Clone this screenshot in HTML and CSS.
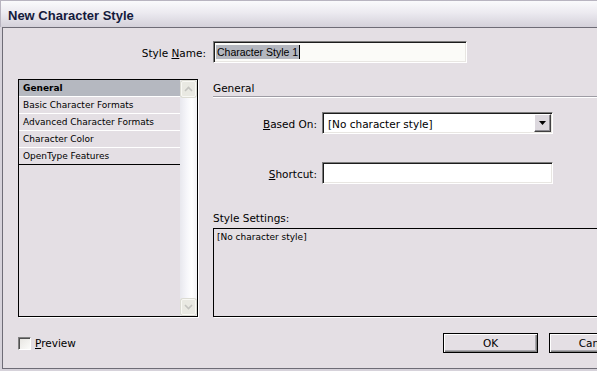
FILE: index.html
```html
<!DOCTYPE html>
<html lang="en">
<head>
    <meta charset="UTF-8">
    <title>New Character Style</title>
    <link rel="stylesheet" href="styles.css">
</head>
<body>
    <div class="window">
        <div class="titlebar">New Character Style</div>

        <div class="frame">
            <div class="name-row">
                <label class="name-label">Style <u>N</u>ame:</label>
                <div class="text-input name-input">
                    <span class="selected-text">Character Style 1</span><span class="caret"></span>
                </div>
            </div>

            <div class="main">
                <div class="listbox">
                    <ul class="list-items">
                        <li class="list-item active">General</li>
                        <li class="list-item">Basic Character Formats</li>
                        <li class="list-item">Advanced Character Formats</li>
                        <li class="list-item">Character Color</li>
                        <li class="list-item last">OpenType Features</li>
                    </ul>
                    <div class="scrollbar">
                        <div class="scroll-btn">
                            <svg width="9" height="6" viewBox="0 0 9 6"><path d="M1 5 L4.5 1.5 L8 5" fill="none" stroke="#c4c4c0" stroke-width="1.6"/></svg>
                        </div>
                        <div class="scroll-btn">
                            <svg width="9" height="6" viewBox="0 0 9 6"><path d="M1 1 L4.5 4.5 L8 1" fill="none" stroke="#c4c4c0" stroke-width="1.6"/></svg>
                        </div>
                    </div>
                </div>

                <div class="panel">
                    <div class="panel-heading">General</div>

                    <div class="field-row based-row">
                        <label class="field-label"><u>B</u>ased On:</label>
                        <div class="text-input select-box">
                            <span class="select-value">[No character style]</span>
                            <div class="drop-btn">
                                <svg width="7" height="4" viewBox="0 0 7 4"><path d="M0 0 H7 L3.5 4 Z" fill="#000"/></svg>
                            </div>
                        </div>
                    </div>

                    <div class="field-row shortcut-row">
                        <label class="field-label"><u>S</u>hortcut:</label>
                        <div class="text-input shortcut-input"></div>
                    </div>

                    <div class="settings-label">Style Settings:</div>
                    <div class="settings-box">[No character style]</div>
                </div>
            </div>

            <div class="footer">
                <label class="preview">
                    <span class="checkbox"></span>
                    <span><u>P</u>review</span>
                </label>
                <div class="buttons">
                    <button class="btn">OK</button>
                    <button class="btn">Cancel</button>
                </div>
            </div>
        </div>
    </div>
</body>
</html>
```

FILE: styles.css
```css
* {
    margin: 0;
    padding: 0;
    box-sizing: border-box;
}

body {
    width: 597px;
    height: 371px;
    overflow: hidden;
    background: #d6d2da;
    font-family: "DejaVu Sans", sans-serif;
    font-size: 10.5px;
    color: #000;
}

u {
    text-decoration: underline;
    text-underline-offset: 1px;
}

.window {
    width: 660px;
    height: 371px;
}

.titlebar {
    height: 27px;
    padding: 7px 0 0 7px;
    border-top: 1px solid #b8b4c0;
    border-left: 1px solid #b8b4c0;
    background: linear-gradient(#fafafc 0%, #eceaf0 45%, #d4d1da 100%);
    font-family: "Liberation Sans", sans-serif;
    font-weight: bold;
    font-size: 13px;
    line-height: 15px;
    color: #141a3c;
}

.frame {
    margin-left: 2px;
    height: 342px;
    border: 1px solid #6e6c76;
    border-right: none;
    background: #e4dfe4;
}

/* style name */

.name-row {
    display: flex;
    align-items: center;
    margin-top: 13px;
    height: 22px;
}

.name-label {
    width: 210px;
    padding: 2px 7px 0 0;
    text-align: right;
}

.text-input {
    height: 22px;
    background: #fbfbf8;
    border: 1px solid;
    border-color: #7c7c7c #fff #fff #7c7c7c;
    box-shadow: inset 1px 1px 0 #1c1c1c, inset -1px -1px 0 #e8e6e2;
}

.name-input {
    width: 254px;
    display: flex;
    align-items: center;
    padding-left: 2px;
    font-family: "Liberation Sans", sans-serif;
    font-size: 10.5px;
}

.selected-text {
    background: #b4b7bf;
    line-height: 14px;
    padding: 0 1px;
}

.caret {
    width: 1px;
    height: 14px;
    background: #000;
}

/* list + panel */

.main {
    display: flex;
    margin-top: 16px;
    padding: 0 18px 0 15px;
}

.listbox {
    display: flex;
    width: 180px;
    height: 238px;
    border: 1px solid #000;
    box-shadow: 1px 1px 0 #fff;
}

.list-items {
    list-style: none;
    width: 161px;
}

.list-item {
    height: 17px;
    padding-left: 4px;
    border-bottom: 1px solid #fff;
    font-size: 9px;
    line-height: 16px;
}

.list-item.active {
    background: #b5b8c0;
    font-weight: bold;
}

.list-item.last {
    border-bottom-color: #000;
}

.scrollbar {
    width: 17px;
    display: flex;
    flex-direction: column;
    justify-content: space-between;
    padding: 1px;
    background: linear-gradient(90deg, #e8e8ee 0%, #f6f6fa 40%, #ffffff 70%, #f2f2f4 100%);
}

.scroll-btn {
    width: 15px;
    height: 16px;
    display: flex;
    align-items: center;
    justify-content: center;
    background: #e9e9e2;
    border: 1px solid #f8f8f4;
    border-radius: 2px;
    box-shadow: 0 0 0 1px #dcdcd4;
}

.panel {
    flex: 1;
    margin-left: 15px;
}

.panel-heading {
    height: 18px;
    padding-top: 3px;
    line-height: 13px;
    border-bottom: 1px solid #9e9ca4;
    box-shadow: 0 1px 0 #fff;
}

.field-row {
    display: flex;
    align-items: center;
}

.based-row {
    margin-top: 15px;
}

.shortcut-row {
    margin-top: 28px;
}

.field-label {
    width: 105px;
    padding: 2px 1px 0 0;
    text-align: right;
}

.select-box {
    width: 231px;
    margin-left: 4px;
    display: flex;
    align-items: center;
    justify-content: space-between;
    padding: 0 1px 0 5px;
    background: #fff;
}

.select-value {
    padding-top: 1px;
}

.drop-btn {
    width: 17px;
    height: 18px;
    display: flex;
    align-items: center;
    justify-content: center;
    background: #dcd8de;
    border: 1px solid;
    border-color: #fff #404040 #404040 #fff;
    box-shadow: inset -1px -1px 0 #8c8a90;
}

.shortcut-input {
    width: 231px;
    margin-left: 4px;
    background: #fff;
}

.settings-label {
    margin-top: 28px;
    line-height: 13px;
}

.settings-box {
    height: 89px;
    margin-top: 3px;
    padding: 2px 3px;
    border: 1px solid #000;
    box-shadow: 1px 1px 0 #fff;
    font-size: 9px;
    line-height: 12px;
}

/* footer */

.footer {
    display: flex;
    align-items: center;
    height: 20px;
    margin-top: 16px;
    padding: 0 16px 0 15px;
}

.preview {
    flex: 1;
    display: flex;
    align-items: center;
    gap: 4px;
}

.checkbox {
    width: 13px;
    height: 13px;
    border: 1px solid;
    border-color: #808080 #fff #fff #808080;
    box-shadow: inset 1px 1px 0 #505050;
    background: linear-gradient(135deg, #e6e4e0, #fbfbf9);
}

.buttons {
    display: flex;
    gap: 11px;
}

.btn {
    width: 95px;
    height: 20px;
    font-family: "DejaVu Sans", sans-serif;
    font-size: 10.5px;
    color: #000;
    background: #e4dfe4;
    border: 1px solid #000;
    box-shadow: inset 1px 1px 0 #fff, inset -1px -1px 0 #808080, inset -2px -2px 0 #a8a6ac;
}
```
